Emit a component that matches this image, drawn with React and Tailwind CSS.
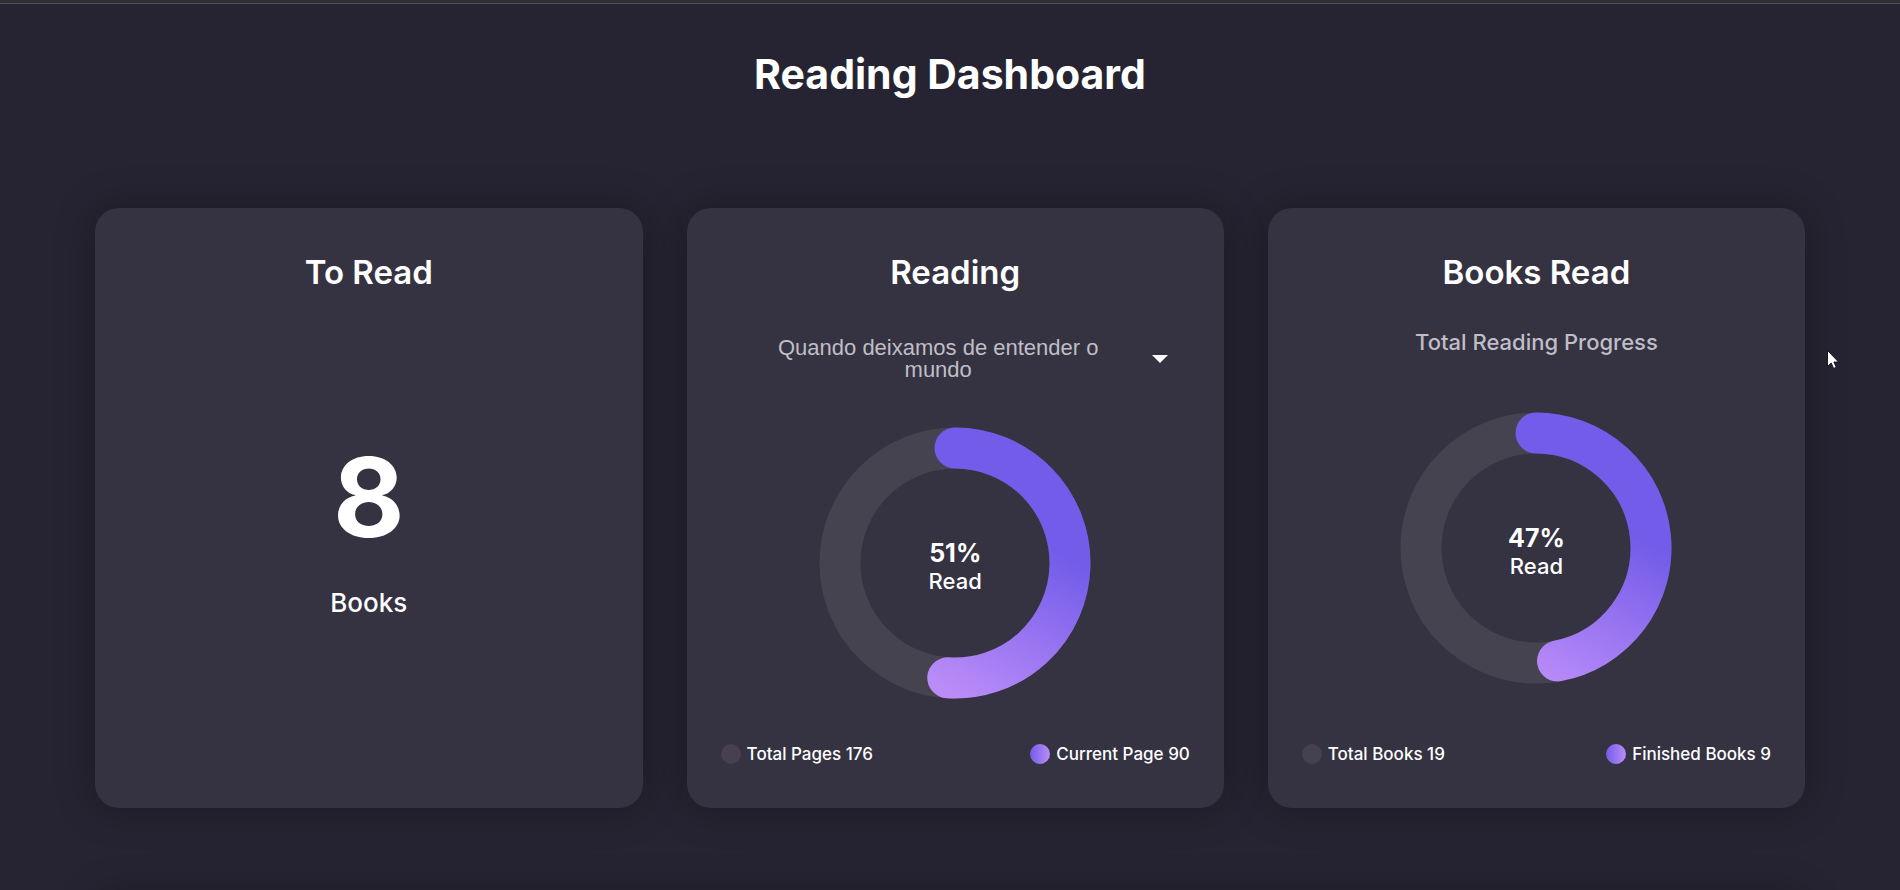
function arc(percent) {
  const angle = (percent / 100) * 2 * Math.PI;
  const x = 136 + 115 * Math.sin(angle);
  const y = 136 - 115 * Math.cos(angle);
  return `M136 21A115 115 0 ${percent > 50 ? 1 : 0} 1 ${x} ${y}`;
}

function Donut({ id, percent }) {
  return (
    <div className="grid size-[272px] shrink-0 place-items-center">
      <svg viewBox="0 0 272 272" className="col-start-1 row-start-1 size-full" aria-hidden="true">
        <defs>
          <linearGradient id={id} gradientUnits="userSpaceOnUse" x1="220" y1="116" x2="136" y2="268">
            <stop offset="0" stopColor="#735ce9" />
            <stop offset="1" stopColor="#bb8cf8" />
          </linearGradient>
        </defs>
        <circle cx="136" cy="136" r="115" fill="none" stroke="#464350" strokeWidth="41" />
        <path
          d={arc(percent)}
          fill="none"
          stroke={`url(#${id})`}
          strokeWidth="41"
          strokeLinecap="round"
        />
      </svg>
      <p className="col-start-1 row-start-1 flex flex-col items-center pt-2">
        <strong className="text-[25px] leading-7 font-bold">{percent}%</strong>
        <span className="text-[22px] leading-7 font-medium">Read</span>
      </p>
    </div>
  );
}

function Card({ title, className, children }) {
  return (
    <section
      className={`flex min-h-[600px] flex-col items-center rounded-3xl bg-[#353242] px-8 pt-11 pb-10 shadow-[0_0_40px_rgba(0,0,0,0.3)] ${className}`}
    >
      <h2 className="text-[33px] leading-10 font-semibold">{title}</h2>
      {children}
    </section>
  );
}

function Legend({ items }) {
  return (
    <ul className="mt-auto flex w-full justify-between px-0.5 text-[17px] leading-7 font-medium">
      {items.map((item) => (
        <li key={item.label} className="flex items-center gap-1.5">
          <span
            className={
              item.active
                ? "size-5 rounded-full bg-linear-to-r from-[#735ce9] to-[#bb8cf8]"
                : "size-5 rounded-full bg-[#46404f]"
            }
          />
          {item.label} {item.value}
        </li>
      ))}
    </ul>
  );
}

export default function App() {
  return (
    <div className="h-screen overflow-hidden border-t-3 border-[#2e2d33] bg-[#262432] font-['Inter',sans-serif] text-white">
      <div className="border-t border-[#504e5c] px-[5%] pt-11">
        <h1 className="text-center text-[41px] leading-[52px] font-bold">Reading Dashboard</h1>
        <main className="mt-[108px] flex gap-11">
          <Card title="To Read" className="flex-[1.022]">
            <div className="flex flex-1 flex-col items-center justify-center pb-2.5">
              <strong className="text-[110px] leading-[132px] font-bold">8</strong>
              <span className="mt-6 text-[26px] leading-8 font-medium">Books</span>
            </div>
          </Card>
          <Card title="Reading" className="flex-1">
            <button
              type="button"
              aria-haspopup="listbox"
              className="mt-[45px] mb-[46px] flex w-full items-center pr-6 pl-1.5 font-['Liberation_Sans',sans-serif] text-[22px] leading-[22px] text-[#bfbec6]"
            >
              <span className="flex-1 px-8 text-center">Quando deixamos de entender o mundo</span>
              <svg viewBox="0 0 16 8" className="w-4 text-white" fill="currentColor" aria-hidden="true">
                <path d="M0 0h16L8 8z" />
              </svg>
            </button>
            <Donut id="pages-progress" percent={51} />
            <Legend
              items={[
                { label: "Total Pages", value: 176 },
                { label: "Current Page", value: 90, active: true },
              ]}
            />
          </Card>
          <Card title="Books Read" className="flex-1">
            <p className="mt-9 mb-14 text-[22px] leading-7 font-medium text-[#bfbec6]">
              Total Reading Progress
            </p>
            <Donut id="books-progress" percent={47} />
            <Legend
              items={[
                { label: "Total Books", value: 19 },
                { label: "Finished Books", value: 9, active: true },
              ]}
            />
          </Card>
        </main>
        <div className="mt-[88px] h-40 rounded-3xl bg-[#353242] shadow-[0_0_40px_rgba(0,0,0,0.3)]" />
      </div>
      <svg viewBox="0 0 12 19" className="absolute top-[350px] left-[1827px] h-[19px] w-3" aria-hidden="true">
        <path
          d="M.5.5v16l3.700-3.500 2.400 5.500 2.700-1.200-2.400-5.300h4.700z"
          fill="#fff"
          stroke="#1a1824"
          strokeWidth="1"
        />
      </svg>
    </div>
  );
}
